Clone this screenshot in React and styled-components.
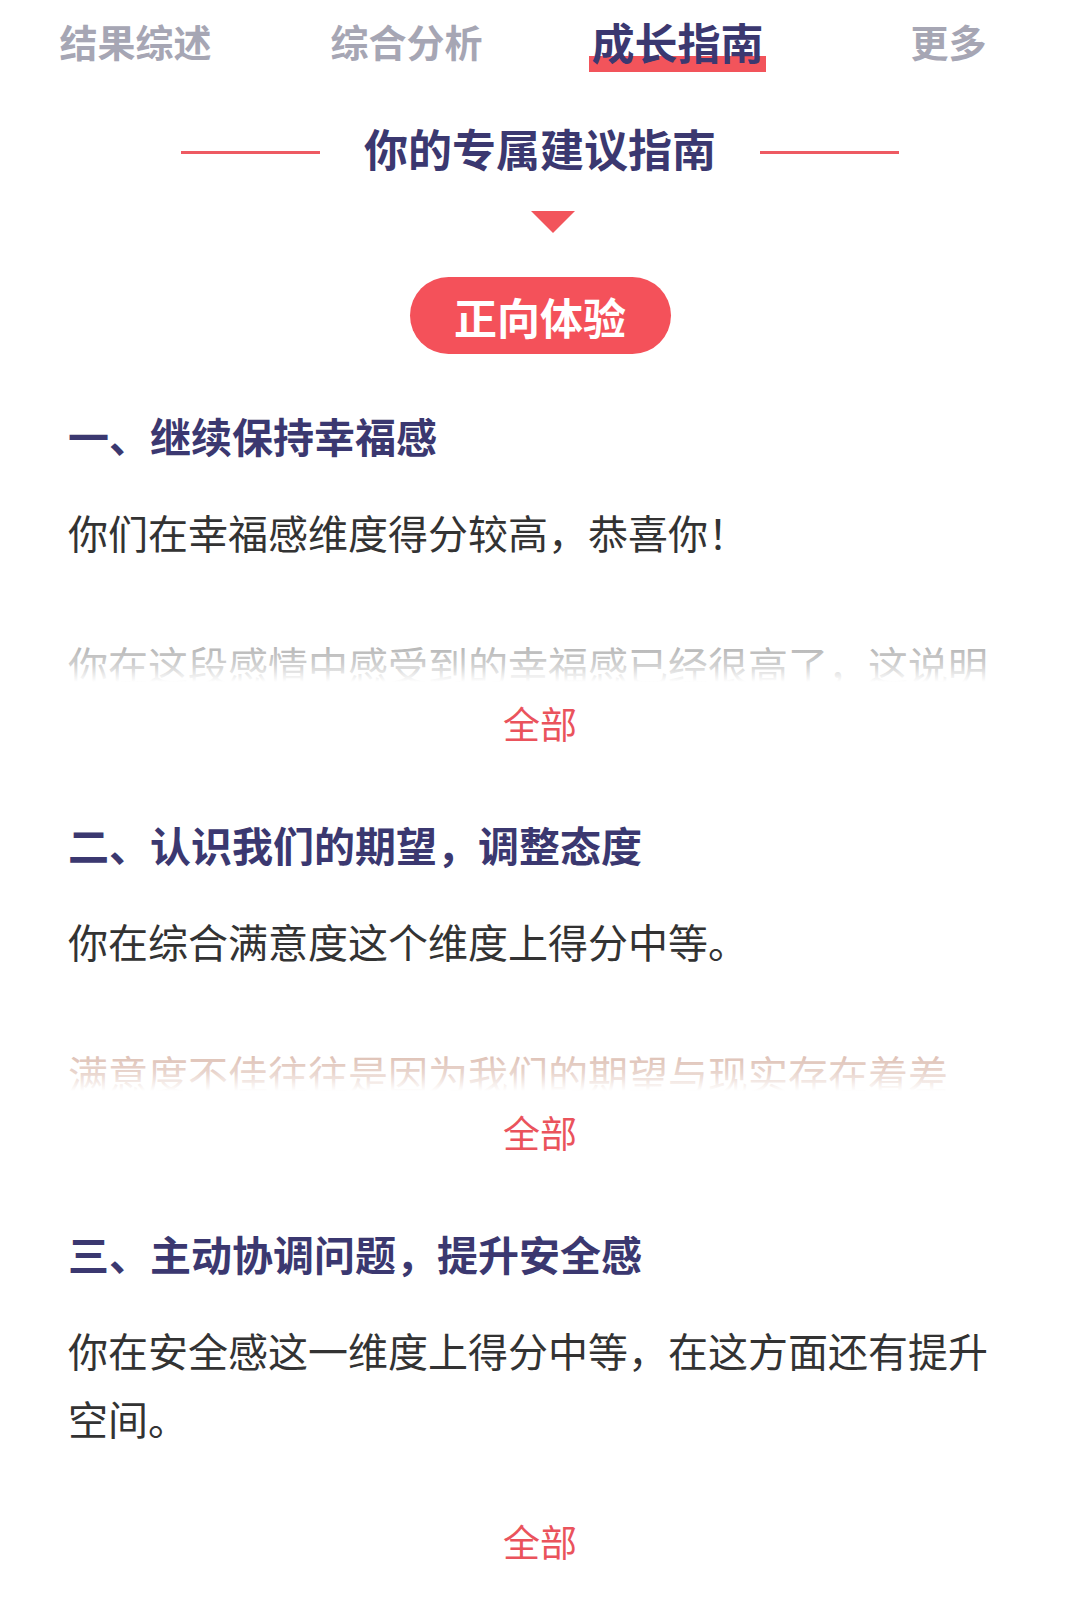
import React from 'react';
import styled, { createGlobalStyle } from 'styled-components';

const GlobalStyle = createGlobalStyle`
  html, body {
    margin: 0;
    padding: 0;
    background: #ffffff;
  }
  body {
    font-family: "Noto Sans CJK SC", "Noto Sans", sans-serif;
    color: #333333;
  }
`;

const Page = styled.div`
  width: 1080px;
  min-height: 1601px;
  background: #ffffff;
  overflow: hidden;
`;

const TabBar = styled.nav`
  display: grid;
  grid-template-columns: repeat(4, 271px);
  height: 82px;
  align-items: center;
`;

const Tab = styled.div`
  justify-self: center;
  position: relative;
  font-size: ${(p) => (p.active ? '43px' : '38px')};
  font-weight: 700;
  line-height: 1;
  color: ${(p) => (p.active ? '#3b3870' : '#a6a6b4')};
  z-index: 0;

  &::after {
    content: '';
    display: ${(p) => (p.active ? 'block' : 'none')};
    position: absolute;
    left: -3px;
    right: -2px;
    bottom: -9px;
    height: 16px;
    background: #f2545b;
    z-index: -1;
  }
`;

const GuideHeader = styled.div`
  display: flex;
  align-items: center;
  justify-content: center;
  gap: 44px;
  margin-top: 35px;
  height: 62px;
`;

const RedLine = styled.span`
  width: 139px;
  height: 3px;
  background: #ee5a62;
  transform: translateY(4px);
`;

const GuideTitle = styled.h2`
  margin: 0;
  font-size: 44px;
  font-weight: 700;
  color: #3b3870;
  line-height: 62px;
`;

const Arrow = styled.div`
  width: 0;
  height: 0;
  margin: 32px 0 0 calc(50% - 9px);
  border-left: 22px solid transparent;
  border-right: 22px solid transparent;
  border-top: 22px solid #f2545b;
`;

const PillRow = styled.div`
  display: flex;
  justify-content: center;
  margin-top: 44px;
`;

const Pill = styled.div`
  width: 261px;
  height: 77px;
  border-radius: 39px;
  background: #f4515a;
  color: #ffffff;
  font-size: 43px;
  font-weight: 700;
  display: flex;
  align-items: center;
  justify-content: center;
`;

const Sections = styled.div`
  padding: 0 77px 0 68px;
  margin-top: 50px;
`;

const Section = styled.section`
  & + & {
    margin-top: 65px;
  }
`;

const SectionTitle = styled.h3`
  margin: 0;
  font-size: 41px;
  font-weight: 700;
  line-height: 62px;
  color: #3b3870;
`;

const Collapse = styled.div`
  position: relative;
  margin-top: 32px;
  max-height: 184px;
  overflow: hidden;

  &::after {
    content: '';
    position: absolute;
    left: 0;
    right: 0;
    bottom: 0;
    height: 44px;
    background: linear-gradient(
      to bottom,
      rgba(255, 255, 255, 0.2),
      rgba(255, 255, 255, 0.55) 60%,
      #ffffff
    );
  }
`;

const Paragraph = styled.p`
  margin: 0 0 64px;
  font-size: 40px;
  line-height: 68px;
  color: ${(p) => (p.faded ? p.tone || '#959595' : '#333333')};
`;

const MoreLink = styled.div`
  margin-top: 16px;
  text-align: center;
  font-size: 37px;
  line-height: 50px;
  color: #ea535c;
  padding-left: 9px;
`;

const tabs = ['结果综述', '综合分析', '成长指南', '更多'];

const sections = [
  {
    title: '一、继续保持幸福感',
    paragraphs: [
      { text: '你们在幸福感维度得分较高，恭喜你！' },
      {
        text: '你在这段感情中感受到的幸福感已经很高了，这说明你们之间的相处非常融洽，彼此都能从关系中获得满足。',
        faded: true,
      },
    ],
  },
  {
    title: '二、认识我们的期望，调整态度',
    paragraphs: [
      { text: '你在综合满意度这个维度上得分中等。' },
      {
        text: '满意度不佳往往是因为我们的期望与现实存在着差距，学会调整期望会让关系更轻松。',
        faded: true,
        tone: '#cfa594',
      },
    ],
  },
  {
    title: '三、主动协调问题，提升安全感',
    paragraphs: [
      { text: '你在安全感这一维度上得分中等，在这方面还有提升空间。' },
      { text: '安全感来自于彼此的信任与沟通，遇到问题时主动协调会让双方更安心。', faded: true },
    ],
  },
];

export default function App() {
  return (
    <Page>
      <GlobalStyle />
      <TabBar>
        {tabs.map((t) => (
          <Tab key={t} active={t === '成长指南'}>
            {t}
          </Tab>
        ))}
      </TabBar>

      <GuideHeader>
        <RedLine />
        <GuideTitle>你的专属建议指南</GuideTitle>
        <RedLine />
      </GuideHeader>
      <Arrow />
      <PillRow>
        <Pill>正向体验</Pill>
      </PillRow>

      <Sections>
        {sections.map((s) => (
          <Section key={s.title}>
            <SectionTitle>{s.title}</SectionTitle>
            <Collapse>
              {s.paragraphs.map((p, i) => (
                <Paragraph key={i} faded={p.faded} tone={p.tone}>
                  {p.text}
                </Paragraph>
              ))}
            </Collapse>
            <MoreLink>全部</MoreLink>
          </Section>
        ))}
      </Sections>
    </Page>
  );
}
